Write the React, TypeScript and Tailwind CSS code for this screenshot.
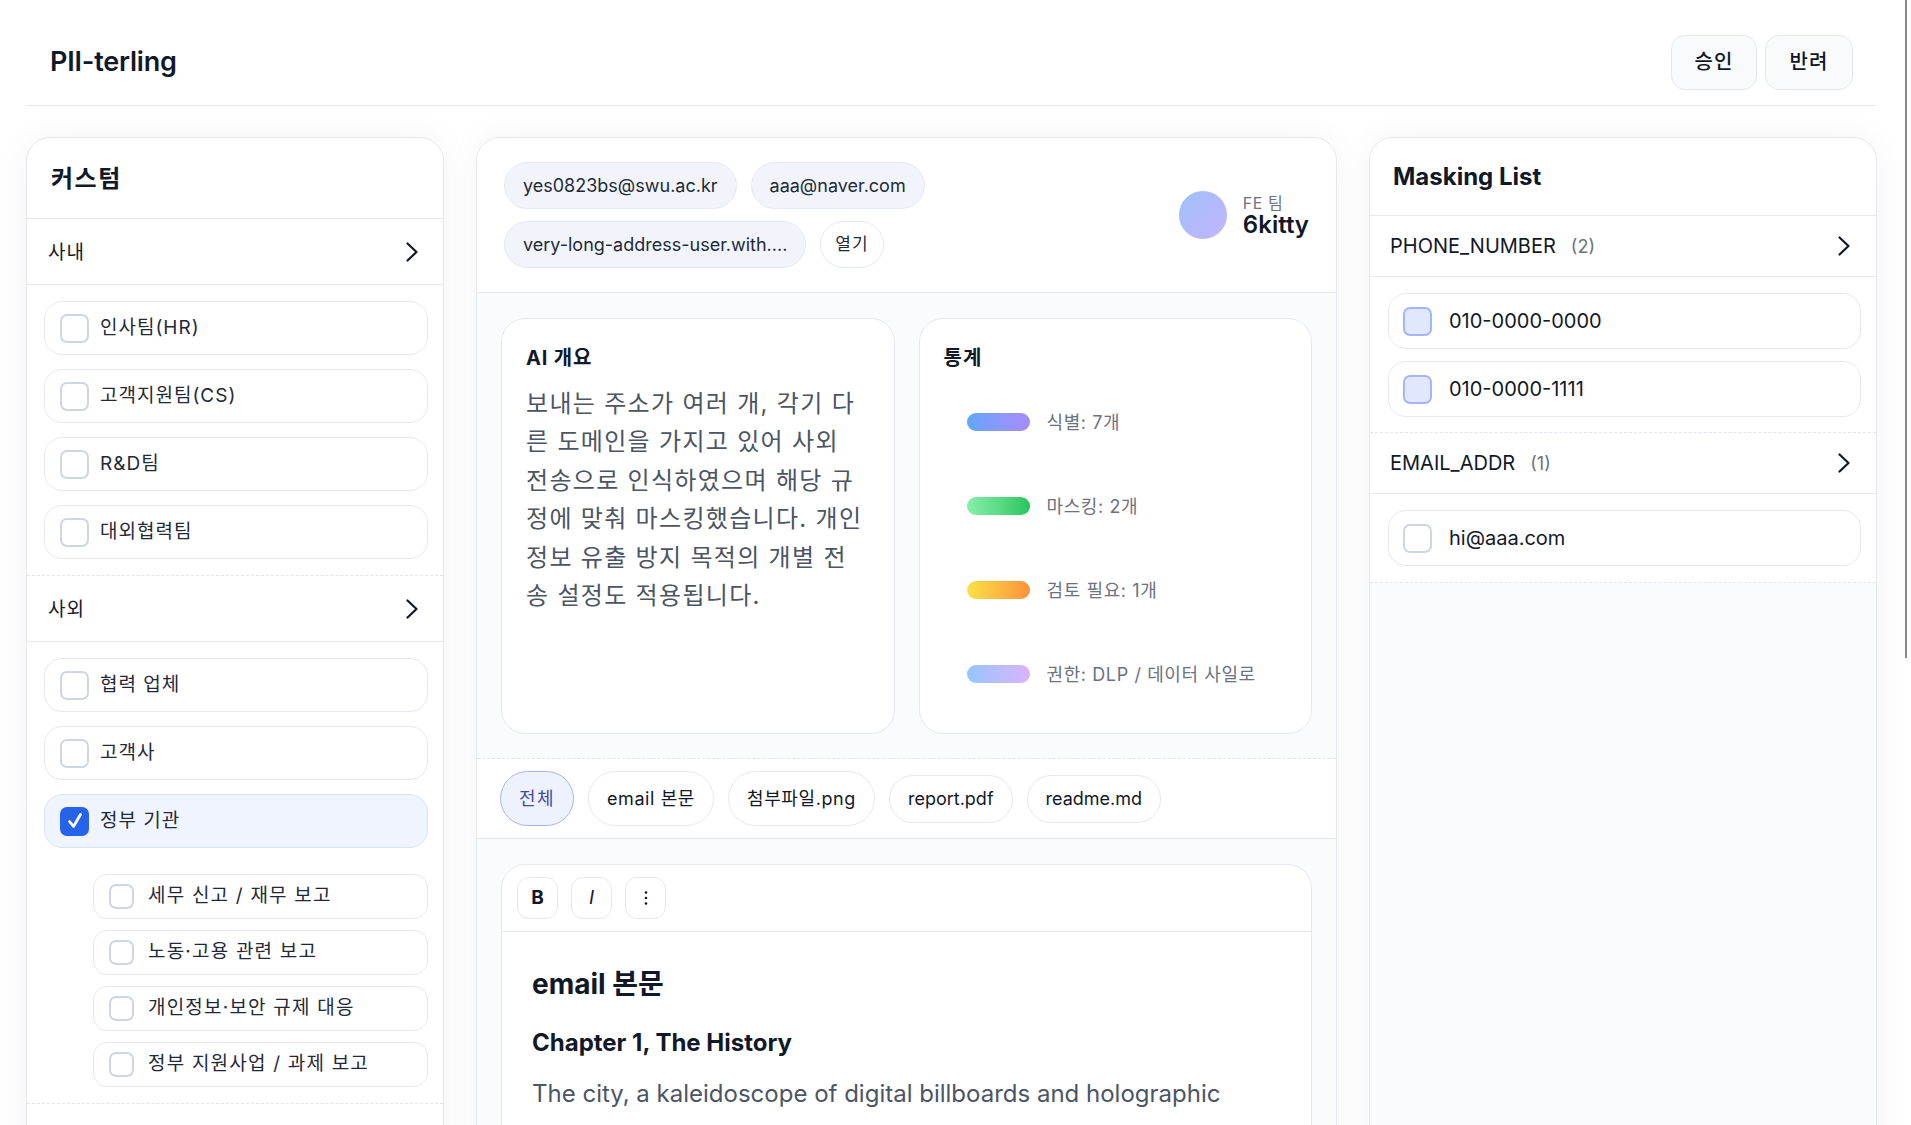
import React from "react";

const Chevron = () => (
  <svg width="12" height="20" viewBox="0 0 12 20" fill="none">
    <path d="M1.5 1.5 L10.5 10 L1.5 18.5" stroke="#111827" strokeWidth="2.2" strokeLinecap="round" strokeLinejoin="round" />
  </svg>
);

const Box = ({ size = "lg", checked = false, tint = false }: { size?: "lg" | "sm"; checked?: boolean; tint?: boolean }) => {
  const dim = size === "lg" ? "w-[29px] h-[29px] rounded-[7px]" : "w-[25px] h-[25px] rounded-[7px]";
  if (checked)
    return (
      <span className={`${dim} shrink-0 bg-[#2563eb] flex items-center justify-center`}>
        <svg width="24" height="24" viewBox="0 0 24 24" fill="none">
          <path d="M6.5 12.5 L10.5 17.5 L17.5 5.5" stroke="#fff" strokeWidth="2.8" strokeLinecap="round" strokeLinejoin="round" />
        </svg>
      </span>
    );
  return (
    <span
      className={`${dim} shrink-0 border-2 ${tint ? "bg-[#e0e7ff] border-[#a5b4fc]" : "bg-white border-[#cfd6e3]"}`}
    />
  );
};

const MainItem = ({ label, checked = false }: { label: string; checked?: boolean }) => (
  <div
    className={`h-[54px] rounded-[18px] border flex items-center pl-[15px] gap-[11px] ${
      checked ? "bg-[#eff4ff] border-[#dbe4f7]" : "bg-white border-[#e6e8ef]"
    }`}
  >
    <Box checked={checked} />
    <span className="text-[19px] tracking-[1px] text-[#1f2937]">{label}</span>
  </div>
);

const SubItem = ({ label }: { label: string }) => (
  <div className="h-[45px] rounded-[14px] border border-[#e6e8ef] bg-white flex items-center pl-[15px] gap-[14px]">
    <Box size="sm" />
    <span className="text-[19px] tracking-[1.2px] text-[#1f2937]">{label}</span>
  </div>
);

const SectionHead = ({ label }: { label: string }) => (
  <div className="h-[66px] border-b border-[#e6e8ef] flex items-center justify-between pl-[21px] pr-[25px]">
    <span className="pt-[3px] text-[19px] tracking-[1px] text-[#111827]">{label}</span>
    <Chevron />
  </div>
);

const Chip = ({ children, white = false }: { children: React.ReactNode; white?: boolean }) => (
  <span
    className={`h-[47px] rounded-full border flex items-center text-[#1f2937] whitespace-nowrap ${
      white ? "bg-white border-[#e3e8f2] px-[14px] text-[17px] tracking-[1px]" : "bg-[#f1f5fb] border-[#e3e8f2] px-[18px] text-[18px]"
    }`}
  >
    {children}
  </span>
);

const StatRow = ({ grad, label }: { grad: string; label: string }) => (
  <div className="h-[84px] flex items-center">
    <span className={`w-[63px] h-[18px] rounded-full ${grad}`} />
    <span className="ml-[17px] text-[18px] tracking-[0.6px] text-[#6b7280]">{label}</span>
  </div>
);

const Tab = ({ label, tall, active = false }: { label: string; tall: boolean; active?: boolean }) => (
  <span
    className={`${tall ? "h-[55px] tracking-[0.6px]" : "h-[48px]"} rounded-full border flex items-center px-[18px] text-[18px] whitespace-nowrap ${
      active ? "bg-[#eef2ff] border-[#a5b4fc] text-[#3f4b9c] tracking-[1.4px]" : "bg-white border-[#e6e8ef] text-[#111827]"
    }`}
  >
    {label}
  </span>
);

const ToolBtn = ({ children }: { children: React.ReactNode }) => (
  <span className="w-[41px] h-[42px] rounded-[12px] border border-[#e6e8ef] bg-white flex items-center justify-center text-[19px] text-[#111827]">
    {children}
  </span>
);

const MaskHead = ({ label, count }: { label: string; count: number }) => (
  <div className="h-[61px] border-b border-[#e6e8ef] flex items-center justify-between pl-[20px] pr-[26px]">
    <div className="flex items-center">
      <span className="text-[20px] text-[#111827]">{label}</span>
      <span className="ml-[15px] text-[18px] text-[#6b7280]">({count})</span>
    </div>
    <Chevron />
  </div>
);

const MaskItem = ({ label, tint = false }: { label: string; tint?: boolean }) => (
  <div className="h-[56px] rounded-[18px] border border-[#e6e8ef] bg-white flex items-center pl-[14px] gap-[17px]">
    <Box tint={tint} />
    <span className="text-[20px] text-[#111827]">{label}</span>
  </div>
);

export default function App() {
  return (
    <div className="relative h-[1125px] overflow-hidden bg-white pl-[26px] pr-[34px] font-[Inter,'Noto_Sans_CJK_KR',sans-serif] text-[#111827]">
      {/* header */}
      <header className="h-[106px] pt-[19px] border-b border-[#e6e8ef] flex items-center justify-between px-6">
        <h1 className="text-[27px] font-semibold tracking-[-0.2px] text-[#111827]">PII-terling</h1>
        <div className="flex gap-2">
          <button className="w-[86px] h-[55px] rounded-[14px] border border-[#e6e8ef] bg-[#f8fafc] text-[20px] tracking-[1px] font-medium text-[#111827]">
            승인
          </button>
          <button className="w-[88px] h-[55px] rounded-[14px] border border-[#e6e8ef] bg-[#f8fafc] text-[20px] tracking-[1px] font-medium text-[#111827]">
            반려
          </button>
        </div>
      </header>

      <main className="mt-[31px] flex gap-[32px] items-start">
        {/* left card */}
        <section className="w-[418px] shrink-0 h-[1100px] rounded-[24px] border border-[#e6e8ef] bg-white overflow-hidden shadow-[0_0_32px_rgba(17,24,39,0.05)]">
          <div className="h-[81px] border-b border-[#e6e8ef] flex items-center pl-[24px]">
            <h2 className="pt-[2px] text-[24px] tracking-[1.5px] font-bold text-[#111827]">커스텀</h2>
          </div>
          <SectionHead label="사내" />
          <div className="pl-[17px] pr-[15px] pt-[16px] pb-[16px] flex flex-col gap-[14px] border-b border-dashed border-[#e2e5ec]">
            <MainItem label="인사팀(HR)" />
            <MainItem label="고객지원팀(CS)" />
            <MainItem label="R&D팀" />
            <MainItem label="대외협력팀" />
          </div>
          <SectionHead label="사외" />
          <div className="pl-[17px] pr-[15px] pt-[16px] pb-[16px] border-b border-dashed border-[#e2e5ec]">
            <div className="flex flex-col gap-[14px]">
              <MainItem label="협력 업체" />
              <MainItem label="고객사" />
              <MainItem label="정부 기관" checked />
            </div>
            <div className="mt-[26px] ml-[49px] flex flex-col gap-[11px]">
              <SubItem label="세무 신고 / 재무 보고" />
              <SubItem label="노동·고용 관련 보고" />
              <SubItem label="개인정보·보안 규제 대응" />
              <SubItem label="정부 지원사업 / 과제 보고" />
            </div>
          </div>
        </section>

        {/* middle card */}
        <section className="flex-1 min-w-0 h-[1100px] rounded-[24px] border border-[#e6e8ef] bg-[#fafbfd] overflow-hidden shadow-[0_0_32px_rgba(17,24,39,0.05)]">
          <div className="bg-white py-6 pl-[27px] pr-6 border-b border-[#e6e8ef] flex items-center justify-between">
            <div className="max-w-[520px] flex flex-wrap gap-x-[14px] gap-y-[12px] items-center">
              <Chip>yes0823bs@swu.ac.kr</Chip>
              <Chip>aaa@naver.com</Chip>
              <Chip>very-long-address-user.with....</Chip>
              <Chip white>열기</Chip>
            </div>
            <div className="flex items-center gap-4 pr-[3px]">
              <span className="w-[48px] h-[48px] rounded-full bg-gradient-to-br from-[#9dbffc] to-[#c3b5fd]" />
              <div className="flex flex-col">
                <span className="text-[16px] leading-[18px] tracking-[0.5px] text-[#6b7280]">FE 팀</span>
                <span className="text-[24px] leading-[25px] font-semibold text-[#111827]">6kitty</span>
              </div>
            </div>
          </div>

          <div className="pt-[25px] pb-6 px-6 grid grid-cols-2 gap-6 border-b border-dashed border-[#e2e5ec]">
            <div className="h-[416px] rounded-[24px] border border-[#e6e8ef] bg-white p-6">
              <h3 className="text-[20px] leading-[30px] tracking-[0.8px] font-bold text-[#111827]">AI 개요</h3>
              <p className="mt-[12px] max-w-[340px] text-[24px] leading-[38.4px] tracking-[1.3px] text-[#4b5563]">
                보내는 주소가 여러 개, 각기 다른 도메인을 가지고 있어 사외 전송으로 인식하였으며 해당 규정에 맞춰 마스킹했습니다. 개인정보 유출 방지 목적의 개별 전송 설정도 적용됩니다.
              </p>
            </div>
            <div className="h-[416px] rounded-[24px] border border-[#e6e8ef] bg-white p-6">
              <h3 className="text-[20px] leading-[30px] tracking-[1px] font-bold text-[#111827]">통계</h3>
              <div className="mt-[7px] pl-[23px] flex flex-col">
                <StatRow grad="bg-gradient-to-r from-[#60a5fa] to-[#a78bfa]" label="식별: 7개" />
                <StatRow grad="bg-gradient-to-r from-[#86efac] to-[#22c55e]" label="마스킹: 2개" />
                <StatRow grad="bg-gradient-to-r from-[#fde047] to-[#fb923c]" label="검토 필요: 1개" />
                <StatRow grad="bg-gradient-to-r from-[#93c5fd] to-[#d8b4fe]" label="권한: DLP / 데이터 사일로" />
              </div>
            </div>
          </div>

          <div className="h-[80px] bg-white border-b border-[#e6e8ef] px-[23px] flex items-center gap-[14px]">
            <Tab label="전체" tall active />
            <Tab label="email 본문" tall />
            <Tab label="첨부파일.png" tall />
            <Tab label="report.pdf" tall={false} />
            <Tab label="readme.md" tall={false} />
          </div>

          <div className="pt-[25px] px-6">
            <div className="h-[600px] rounded-[24px] border border-[#e6e8ef] bg-white">
              <div className="px-[15px] py-3 border-b border-[#e6e8ef] flex gap-[13px]">
                <ToolBtn>
                  <span className="font-bold">B</span>
                </ToolBtn>
                <ToolBtn>
                  <span className="italic">I</span>
                </ToolBtn>
                <ToolBtn>
                  <svg width="6" height="16" viewBox="0 0 6 16" fill="#111827">
                    <circle cx="3" cy="2.5" r="1.3" />
                    <circle cx="3" cy="8" r="1.3" />
                    <circle cx="3" cy="13.5" r="1.3" />
                  </svg>
                </ToolBtn>
              </div>
              <div className="px-[30px] pt-[34px]">
                <h2 className="text-[28px] leading-[36px] font-bold text-[#111827]">email 본문</h2>
                <h3 className="mt-[26px] text-[24px] leading-[30px] font-bold text-[#111827]">Chapter 1, The History</h3>
                <p className="mt-[14px] text-[24px] leading-[43px] text-[#4b5563]">
                  The city, a kaleidoscope of digital billboards and holographic
                </p>
              </div>
            </div>
          </div>
        </section>

        {/* right card */}
        <section className="w-[508px] shrink-0 h-[1100px] rounded-[24px] border border-[#e6e8ef] bg-[#fafbfd] overflow-hidden shadow-[0_0_32px_rgba(17,24,39,0.05)]">
          <div className="bg-white">
            <div className="h-[78px] border-b border-[#e6e8ef] flex items-center pl-[23px]">
              <h2 className="text-[24px] font-bold text-[#111827]">Masking List</h2>
            </div>
            <MaskHead label="PHONE_NUMBER" count={2} />
            <div className="pl-[18px] pr-[15px] pt-[16px] pb-[15px] flex flex-col gap-[12px] border-b border-dashed border-[#e2e5ec]">
              <MaskItem label="010-0000-0000" tint />
              <MaskItem label="010-0000-1111" tint />
            </div>
            <MaskHead label="EMAIL_ADDR" count={1} />
            <div className="pl-[18px] pr-[15px] pt-[16px] pb-[16px] flex flex-col gap-[12px] border-b border-dashed border-[#e2e5ec]">
              <MaskItem label="hi@aaa.com" />
            </div>
          </div>
        </section>
      </main>

      {/* overlay scrollbar */}
      <div className="absolute top-0 right-[4px] w-[2px] h-[658px] bg-[#8a8a8a]" />
    </div>
  );
}
